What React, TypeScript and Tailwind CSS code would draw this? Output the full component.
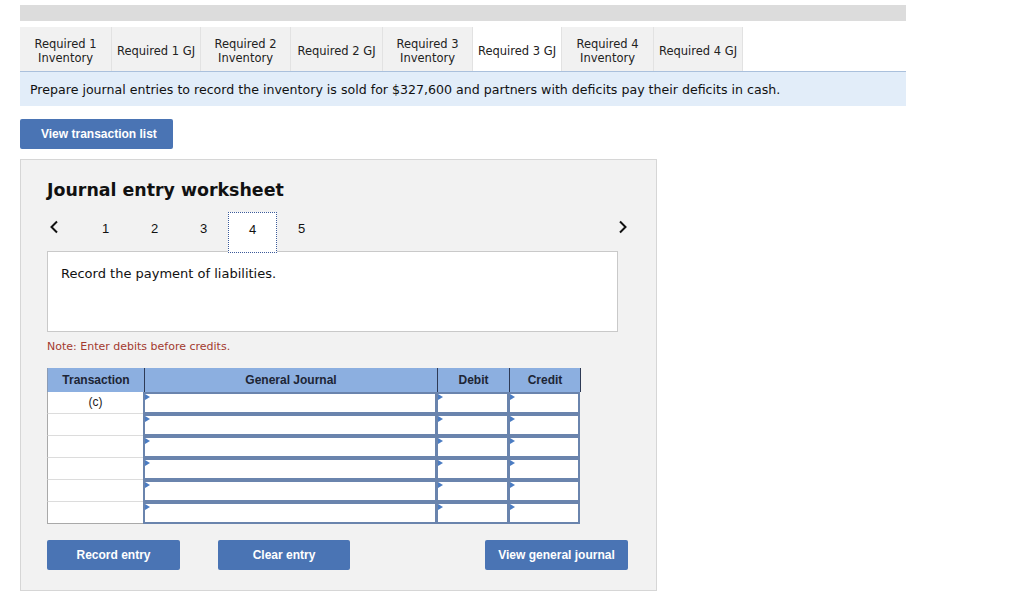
import React from 'react';

const tabs = [
  { label: ['Required 1', 'Inventory'], w: 'w-[92px]' },
  { label: ['Required 1 GJ'], w: 'w-[89px]' },
  { label: ['Required 2', 'Inventory'], w: 'w-[90px]' },
  { label: ['Required 2 GJ'], w: 'w-[92px]' },
  { label: ['Required 3', 'Inventory'], w: 'w-[90px]' },
  { label: ['Required 3 GJ'], w: 'w-[89px]', active: true },
  { label: ['Required 4', 'Inventory'], w: 'w-[92px]' },
  { label: ['Required 4 GJ'], w: 'w-[89px]' },
];

const verdana = { fontFamily: '"DejaVu Sans", Verdana, sans-serif' };
const arial = { fontFamily: '"Liberation Sans", Arial, sans-serif' };

const Marker = () => (
  <span className="absolute left-0 top-0 h-0 w-0 border-y-[3px] border-l-[5px] border-y-transparent border-l-[#4b7cc2]" />
);

const InputCell = ({ w }: { w: string }) => (
  <div className={`relative ${w} h-[22px] border-2 border-[#6a84ad] bg-white -ml-px`}>
    <Marker />
  </div>
);

export default function App() {
  const rows = ['(c)', '', '', '', '', ''];

  return (
    <div className="min-h-[596px] w-[1024px] bg-white pl-[20px] pt-[5px] text-black" style={verdana}>
      {/* top grey strip */}
      <div className="h-[16px] w-[886px] bg-[#dcdcdc]" />

      {/* tabs */}
      <div className="mt-[6px] flex h-[45px] w-[886px] border-b border-[#aac0dc]">
        {tabs.map((t, i) => (
          <div
            key={i}
            className={`${t.w} flex flex-col items-center justify-center border-r border-[#e2e2e2] pt-[3px] text-[11.5px] leading-[14px] text-[#222] ${
              t.active ? 'bg-white' : 'bg-[#f1f1f1]'
            }`}
          >
            {t.label.map((l) => (
              <span key={l}>{l}</span>
            ))}
          </div>
        ))}
      </div>

      {/* instruction band */}
      <div className="flex h-[34px] w-[886px] items-center bg-[#e2edf9] pl-[10px] pt-[3px] text-[12.6px] text-[#111]">
        Prepare journal entries to record the inventory is sold for $327,600 and partners with deficits pay their deficits in cash.
      </div>

      <button
        className="mt-[13px] flex h-[30px] w-[153px] items-center rounded-[2px] bg-[#4a74b4] pl-[21px] text-[12px] font-bold text-white"
        style={arial}
      >
        View transaction list
      </button>

      {/* worksheet panel */}
      <div className="mt-[10px] w-[637px] border border-[#d6d6d6] bg-[#f2f2f2] pb-[20px] pl-[26px] pt-[18px]">
        <div className="text-[17.4px] font-bold leading-[24px] text-[#111]">Journal entry worksheet</div>

        {/* pager */}
        <div className="mt-[10px] flex h-[41px] w-[582px] items-start text-[13px] text-[#111]" style={arial}>
          <div className="flex h-[41px] w-[34px] items-start pl-[2px] pt-[8px]">
            <svg width="10" height="14" viewBox="0 0 10 14">
              <path d="M8 1.5 L2.5 7 L8 12.5" fill="none" stroke="#111" strokeWidth="2" />
            </svg>
          </div>
          {[1, 2, 3, 4, 5].map((n) => (
            <div
              key={n}
              className={`flex h-[41px] w-[49px] justify-center pt-[7px] ${
                n === 4 ? 'relative z-10 border border-dotted border-[#3b5a9a] bg-white' : ''
              }`}
            >
              {n}
            </div>
          ))}
          <div className="ml-auto flex h-[41px] items-start pr-[1px] pt-[8px]">
            <svg width="10" height="14" viewBox="0 0 10 14">
              <path d="M2 1.5 L7.5 7 L2 12.5" fill="none" stroke="#111" strokeWidth="2" />
            </svg>
          </div>
        </div>

        {/* description */}
        <div className="-mt-[2px] h-[81px] w-[571px] border border-[#c9c9c9] bg-white pl-[13px] pt-[12px] text-[13px] text-[#111]">
          Record the payment of liabilities.
        </div>

        <div className="mt-[8px] text-[11px] leading-[14px] text-[#a33a2f]">Note: Enter debits before credits.</div>

        {/* table */}
        <div className="mt-[14px] w-[534px]" style={arial}>
          <div className="flex h-[24px] bg-[#8cafe0] text-[12px] font-bold text-[#1d2535]">
            <div className="flex w-[97px] items-center justify-center border-l border-[#8a9bb5]">Transaction</div>
            <div className="flex w-[293px] items-center justify-center border-l border-[#2e3a55]">General Journal</div>
            <div className="flex w-[72px] items-center justify-center border-l border-[#2e3a55]">Debit</div>
            <div className="flex w-[72px] items-center justify-center border-x border-[#2e3a55]">Credit</div>
          </div>
          {rows.map((r, i) => (
            <div key={i} className="flex h-[22px]">
              <div
                className={`flex w-[97px] items-start justify-center border-x border-[#a9a9a9] bg-white pt-[1px] text-[12px] text-[#222] ${
                  i === rows.length - 1 ? 'border-b' : 'border-b border-b-[#dcdcdc]'
                }`}
              >
                {r}
              </div>
              <InputCell w="w-[294px]" />
              <InputCell w="w-[73px]" />
              <InputCell w="w-[72px]" />
            </div>
          ))}
        </div>

        {/* buttons */}
        <div className="mt-[16px] flex w-[582px] text-[12px] font-bold text-white" style={arial}>
          <button className="h-[30px] w-[133px] rounded-[2px] bg-[#4a74b4]">Record entry</button>
          <button className="ml-[38px] h-[30px] w-[132px] rounded-[2px] bg-[#4a74b4]">Clear entry</button>
          <button className="ml-[135px] h-[30px] w-[143px] rounded-[2px] bg-[#4a74b4]">View general journal</button>
        </div>
      </div>
    </div>
  );
}
